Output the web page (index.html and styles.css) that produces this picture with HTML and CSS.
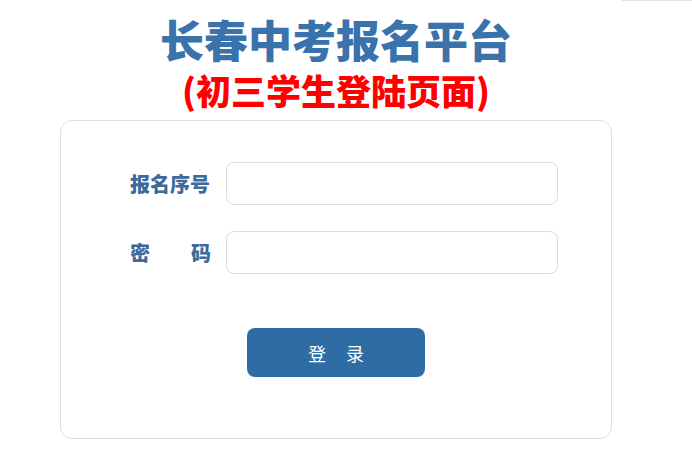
FILE: index.html
```html
<!DOCTYPE html>
<html lang="zh-CN">
<head>
  <meta charset="UTF-8">
  <meta name="viewport" content="width=device-width, initial-scale=1.0">
  <title>长春中考报名平台</title>
  <link rel="stylesheet" href="styles.css">
</head>
<body>

<div class="corner-line"></div>

<div class="page">
  <h1 class="title">长春中考报名平台</h1>
  <h2 class="subtitle">(初三学生登陆页面)</h2>

  <div class="login-box">
    <form class="login-form" onsubmit="return false;">
      <div class="form-row">
        <label for="bmxh" class="form-label">报名序号</label>
        <input type="text" id="bmxh" class="form-input">
      </div>
      <div class="form-row">
        <label for="mm" class="form-label label-spread"><span>密</span><span>码</span></label>
        <input type="password" id="mm" class="form-input">
      </div>
      <div class="btn-row">
        <button type="submit" class="login-btn"><span>登</span><span>录</span></button>
      </div>
    </form>
  </div>
</div>

</body>
</html>
```

FILE: styles.css
```css
body {
  margin: 0;
  background: #fff;
  font-family: "Noto Sans CJK SC", "Microsoft YaHei", sans-serif;
}

.corner-line {
  position: absolute;
  top: 0;
  right: 0;
  width: 70px;
  height: 1px;
  background: #e2e2e2;
}

.page {
  width: 672px;
  display: flex;
  flex-direction: column;
  align-items: center;
}

.title {
  margin: 11px 0 0;
  font-size: 44px;
  line-height: 56px;
  font-weight: 900;
  color: #3a72ab;
}

.subtitle {
  margin: 0;
  font-size: 35px;
  line-height: 45px;
  font-weight: 900;
  color: #ff0000;
}

.login-box {
  box-sizing: border-box;
  width: 552px;
  height: 319px;
  margin-top: 8px;
  border: 1px solid #dedede;
  border-radius: 12px;
  background: #fff;
}

.login-form {
  padding: 41px 0 0 69px;
}

.form-row {
  display: flex;
  align-items: center;
  gap: 15px;
  margin-bottom: 26px;
}

.form-label {
  width: 81px;
  font-size: 20px;
  font-weight: 900;
  color: #3d6a9c;
  white-space: nowrap;
}

.label-spread {
  display: flex;
  justify-content: space-between;
}

.form-input {
  box-sizing: border-box;
  width: 332px;
  height: 43px;
  border: 1px solid #dcdcdc;
  border-radius: 8px;
  outline: none;
  padding: 0 10px;
  font-size: 16px;
}

.btn-row {
  display: flex;
  justify-content: center;
  padding-right: 69px;
  margin-top: 54px;
}

.login-btn {
  display: flex;
  justify-content: center;
  gap: 20px;
  width: 178px;
  height: 49px;
  align-items: center;
  border: none;
  border-radius: 8px;
  background: #2e6ca4;
  color: #fff;
  font-family: "Noto Sans CJK SC", sans-serif;
  font-size: 18px;
  cursor: pointer;
}
```
